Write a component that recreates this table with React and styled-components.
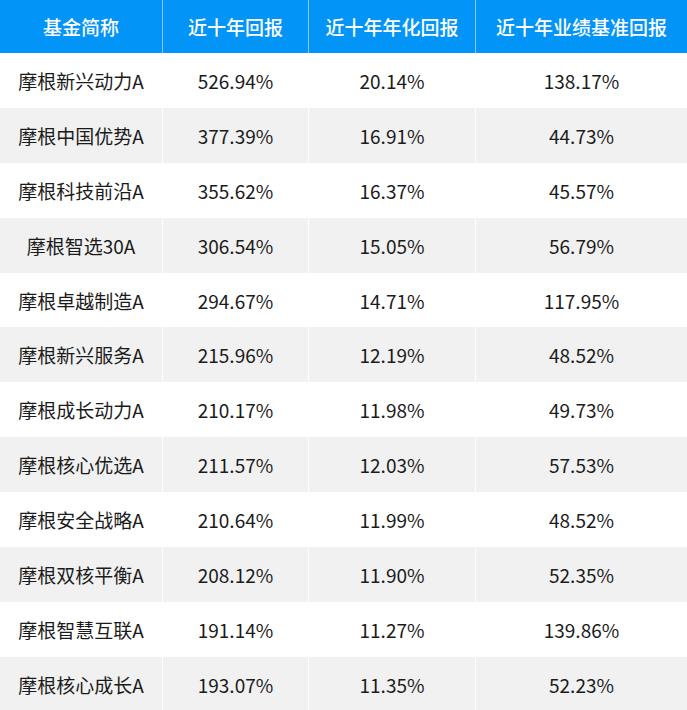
import React from "react";
import styled, { createGlobalStyle } from "styled-components";

const GlobalStyle = createGlobalStyle`
  html, body {
    margin: 0;
    padding: 0;
    background: #ffffff;
  }
  body {
    font-family: "Noto Sans CJK SC", "Noto Sans", sans-serif;
  }
`;

const Table = styled.div`
  width: 687px;
  height: 710px;
  overflow: hidden;
  display: flex;
  flex-direction: column;
`;

const Row = styled.div`
  display: grid;
  grid-template-columns: 163px 146px 167px 1fr;
  height: ${({ $header }) => ($header ? "53px" : "54.9px")};
  flex-shrink: 0;
  background: ${({ $header, $striped }) =>
    $header ? "#0394f7" : $striped ? "#f1f1f1" : "#ffffff"};
  color: ${({ $header }) => ($header ? "#ffffff" : "#1b1b1b")};
  font-weight: ${({ $header }) => ($header ? 500 : 400)};
`;

const Cell = styled.div`
  display: flex;
  align-items: center;
  justify-content: center;
  font-size: 19px;
  white-space: nowrap;
  border-right: 1px solid
    ${({ $header }) => ($header ? "#8bc9f7" : "#ffffff")};

  &:last-child {
    border-right: none;
  }
`;

const headers = ["基金简称", "近十年回报", "近十年年化回报", "近十年业绩基准回报"];

const funds = [
  ["摩根新兴动力A", "526.94%", "20.14%", "138.17%"],
  ["摩根中国优势A", "377.39%", "16.91%", "44.73%"],
  ["摩根科技前沿A", "355.62%", "16.37%", "45.57%"],
  ["摩根智选30A", "306.54%", "15.05%", "56.79%"],
  ["摩根卓越制造A", "294.67%", "14.71%", "117.95%"],
  ["摩根新兴服务A", "215.96%", "12.19%", "48.52%"],
  ["摩根成长动力A", "210.17%", "11.98%", "49.73%"],
  ["摩根核心优选A", "211.57%", "12.03%", "57.53%"],
  ["摩根安全战略A", "210.64%", "11.99%", "48.52%"],
  ["摩根双核平衡A", "208.12%", "11.90%", "52.35%"],
  ["摩根智慧互联A", "191.14%", "11.27%", "139.86%"],
  ["摩根核心成长A", "193.07%", "11.35%", "52.23%"],
];

export default function App() {
  return (
    <>
      <GlobalStyle />
      <Table>
        <Row $header>
          {headers.map((h) => (
            <Cell key={h} $header>
              {h}
            </Cell>
          ))}
        </Row>
        {funds.map((row, i) => (
          <Row key={row[0]} $striped={i % 2 === 1}>
            {row.map((v, j) => (
              <Cell key={j}>{v}</Cell>
            ))}
          </Row>
        ))}
      </Table>
    </>
  );
}
